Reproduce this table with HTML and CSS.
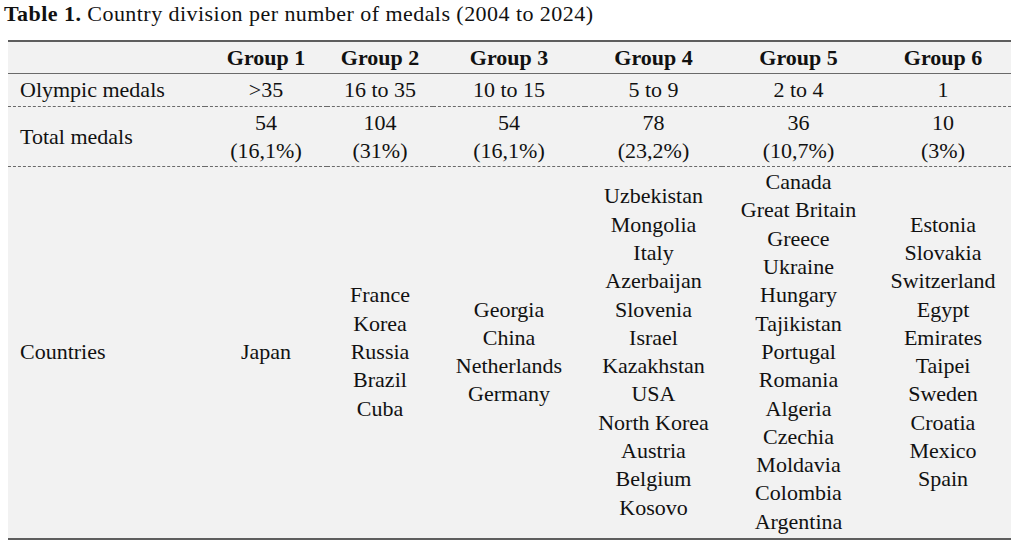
FILE: index.html
```html
<!DOCTYPE html>
<html lang="en">
<head>
<meta charset="utf-8">
<title>Table 1</title>
<link rel="stylesheet" href="styles.css">
</head>
<body>
<p class="caption"><b>Table 1.</b> Country division per number of medals (2004 to 2024)</p>
<table class="medals">
  <colgroup>
    <col class="c-label">
    <col class="c-g1">
    <col class="c-g2">
    <col class="c-g3">
    <col class="c-g4">
    <col class="c-g5">
    <col class="c-g6">
  </colgroup>
  <thead>
    <tr class="head-row">
      <th></th>
      <th>Group 1</th>
      <th>Group 2</th>
      <th>Group 3</th>
      <th>Group 4</th>
      <th>Group 5</th>
      <th>Group 6</th>
    </tr>
  </thead>
  <tbody>
    <tr class="dashed">
      <td class="label">Olympic medals</td>
      <td>&gt;35</td>
      <td>16 to 35</td>
      <td>10 to 15</td>
      <td>5 to 9</td>
      <td>2 to 4</td>
      <td>1</td>
    </tr>
    <tr class="dashed">
      <td class="label">Total medals</td>
      <td>54<br>(16,1%)</td>
      <td>104<br>(31%)</td>
      <td>54<br>(16,1%)</td>
      <td>78<br>(23,2%)</td>
      <td>36<br>(10,7%)</td>
      <td>10<br>(3%)</td>
    </tr>
    <tr class="last">
      <td class="label">Countries</td>
      <td>Japan</td>
      <td>France<br>Korea<br>Russia<br>Brazil<br>Cuba</td>
      <td>Georgia<br>China<br>Netherlands<br>Germany</td>
      <td>Uzbekistan<br>Mongolia<br>Italy<br>Azerbaijan<br>Slovenia<br>Israel<br>Kazakhstan<br>USA<br>North Korea<br>Austria<br>Belgium<br>Kosovo</td>
      <td>Canada<br>Great Britain<br>Greece<br>Ukraine<br>Hungary<br>Tajikistan<br>Portugal<br>Romania<br>Algeria<br>Czechia<br>Moldavia<br>Colombia<br>Argentina</td>
      <td>Estonia<br>Slovakia<br>Switzerland<br>Egypt<br>Emirates<br>Taipei<br>Sweden<br>Croatia<br>Mexico<br>Spain</td>
    </tr>
  </tbody>
</table>
</body>
</html>
```

FILE: styles.css
```css
html, body {
  margin: 0;
  padding: 0;
  background: #ffffff;
}

body {
  font-family: "Liberation Serif", "Times New Roman", serif;
  color: #111111;
}

.caption {
  margin: 0 0 12px 0;
  padding-left: 4px;
  font-size: 22px;
  line-height: 28px;
  letter-spacing: 0.45px;
}

.caption b {
  font-weight: bold;
}

.medals {
  margin-left: 8px;
  width: 1003px;
  border-collapse: collapse;
  table-layout: fixed;
  background: #f2f2f2;
  font-size: 22px;
  line-height: 28.3px;
  border-top: 2px solid #5e5e5e;
  border-bottom: 2px solid #5e5e5e;
}

.c-label { width: 197px; }
.c-g1 { width: 122px; }
.c-g2 { width: 106px; }
.c-g3 { width: 152px; }
.c-g4 { width: 137px; }
.c-g5 { width: 153px; }
.c-g6 { width: 136px; }

.medals th,
.medals td {
  padding: 2px 0 1px 0;
  text-align: center;
  vertical-align: middle;
  font-weight: normal;
  white-space: nowrap;
}

.medals th {
  font-weight: bold;
}

.head-row th {
  border-bottom: 1px solid #6a6a6a;
}

.dashed td {
  border-bottom: 1px dashed #6a6a6a;
}

.medals td.label {
  text-align: left;
  padding-left: 12px;
}

.last td {
  padding-top: 1px;
  padding-bottom: 2px;
}
```
